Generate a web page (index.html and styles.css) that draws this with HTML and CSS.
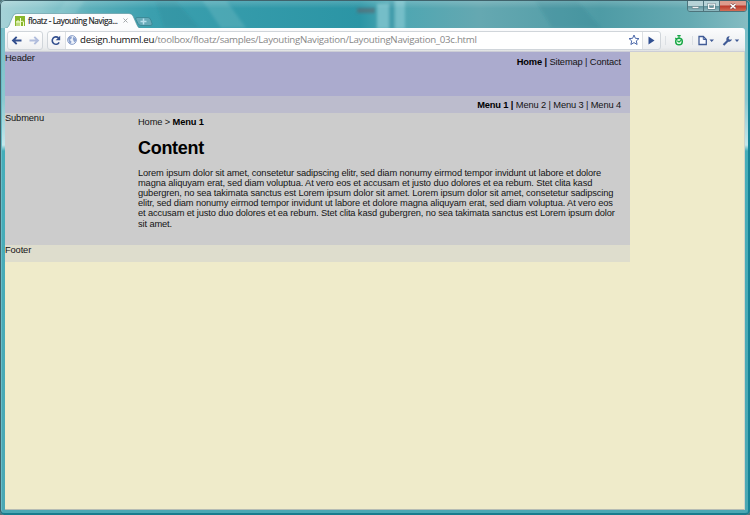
FILE: index.html
```
<!DOCTYPE html>
<html lang="en">
<head>
<meta charset="utf-8">
<title>floatz - Layouting Navigation</title>
<link rel="stylesheet" href="styles.css">
</head>
<body>
<div class="window">
  <header class="titlebar">
    <svg class="glass" viewBox="0 0 750 28" preserveAspectRatio="none" aria-hidden="true">
      <defs>
        <linearGradient id="g" x2="1"><stop offset="0" stop-color="#a6d2d7"/><stop offset=".055" stop-color="#8fc8ce"/><stop offset=".12" stop-color="#5cafba"/><stop offset=".2" stop-color="#3b9fae"/><stop offset=".48" stop-color="#2b95a5"/><stop offset=".52" stop-color="#4ba6b2"/><stop offset=".64" stop-color="#65a8b1"/><stop offset=".8" stop-color="#4e9ba5"/><stop offset=".92" stop-color="#65aab2"/><stop offset="1" stop-color="#86bdc3"/></linearGradient>
        <linearGradient id="v" x2="0" y2="1"><stop stop-color="#fff" stop-opacity=".2"/><stop offset=".3" stop-color="#fff" stop-opacity="0"/></linearGradient>
        <filter id="b"><feGaussianBlur stdDeviation="1.5"/></filter>
      </defs>
      <path fill="url(#g)" d="M0 0h750v28H0z"/>
      <g filter="url(#b)">
        <path fill="#277e8c" opacity=".2" d="M155 0h20l25 28h-36zM535 0h42l24 28h-49z"/>
        <path fill="#bfe6e9" opacity=".16" d="M66 0h19l-20 28H48zM202 0h24l20 28h-25z"/>
        <path fill="#75bec8" d="M377 4h12v25h-12zM395 0h10v29h-10z"/>
        <path fill="#3f9cab" d="M389 0h5v29h-5z"/>
        <path fill="#655e67" opacity=".55" d="M357 8h18v5h-18z"/>
      </g>
      <path fill="url(#v)" d="M0 0h750v28H0z"/>
    </svg>
    <svg class="tabshape" viewBox="0 0 154 16" aria-hidden="true">
      <path d="M0 16C3 15 4 13 5 10L8 3Q9 .5 12 .5H124Q127 .5 128 3L132 12Q133 15.5 137 15.5H154V16Z" fill="#fbfcfd"/>
      <path d="M0 15.5C3 15 4 13 5 10L8 3Q9 .5 12 .5H124Q127 .5 128 3L132 12Q133 15.5 137 15.5" fill="none" stroke="#54919b" stroke-width=".6"/>
      <path d="M132 4.500h11q2 0 3 3l1 3q1 2-2 2h-9q-2 0-3-2l-2-4q-1-2 1-2z" fill="#66aab8" stroke="#337f8c" stroke-width=".7"/>
      <path d="M138.500 5.500v6M135.500 8.500h6" stroke="#b9e0ed" stroke-width="1.500"/>
    </svg>
    <div class="tab">
      <svg class="favicon" viewBox="0 0 10 10"><path fill="#89b62c" d="M0 0h10v10H0z"/><path d="M2 10V5h2v5M1 6h4M5.500 2v8M5.500 6q3-2 3 1v3" fill="none" stroke="#f3ffd5" stroke-width="1"/></svg>
      <span class="tabtitle">floatz - Layouting Naviga...</span>
      <svg class="tabclose" viewBox="0 0 5 5"><path d="M.5.5l4 4M4.500.5l-4 4" stroke="#9a9fa2" stroke-width=".9"/></svg>
    </div>
    <div class="controls">
      <span class="control"><svg viewBox="0 0 16 10"><path d="M4.500 5.500h7v2h-7z" fill="#fff" stroke="#566f76" stroke-width=".6"/></svg></span>
      <span class="control"><svg viewBox="0 0 16 10"><path d="M5 3h6v4.500H5z" fill="none" stroke="#536f77" stroke-width="2.300"/><path d="M5 3h6v4.500H5z" fill="none" stroke="#fff" stroke-width="1.300"/></svg></span>
      <span class="control close"><svg viewBox="0 0 26 10"><path d="M10.500 3l5 4.500M15.500 3l-5 4.500" stroke="#7c4846" stroke-width="2.700"/><path d="M10.500 3l5 4.500M15.500 3l-5 4.500" stroke="#fff" stroke-width="1.600"/></svg></span>
    </div>
  </header>
  <div class="toolbar">
    <div class="group nav">
      <svg viewBox="0 0 34 17"><path d="M13.500 8.500H5.500M8.700 4.800L5 8.500l3.700 3.700" fill="none" stroke="#34508f" stroke-width="1.900"/><path d="M21.500 8.500h8M26.300 4.800L30 8.500l-3.700 3.700" fill="none" stroke="#b1bddd" stroke-width="1.900"/></svg>
    </div>
    <div class="group address">
      <svg class="reload" viewBox="0 0 18 17"><path d="M11.800 10.500A3.900 3.900 0 1 1 11.100 5.800" fill="none" stroke="#34508f" stroke-width="1.700"/><path d="M12.900 3.500v4.800H8.100z" fill="#34508f"/></svg>
      <div class="url">
        <svg class="globe" viewBox="0 0 10 10"><circle cx="5" cy="5" r="4.400" fill="#eef3fb" stroke="#8197c5" stroke-width=".9"/><path d="M1 3l2-1.800 2 .6-.5 1.700L2.700 5l1.700 1.300L4 9 2 7.500zM6.200 2l2.500 1 .5 2.500-1.500 2-1-1.200L5.800 4z" fill="#8da2ce"/></svg>
        <span class="urltext"><b>design.humml.eu</b>/toolbox/floatz/samples/LayoutingNavigation/LayoutingNavigation_03c.html</span>
        <svg class="star" viewBox="0 0 12 12"><path d="M6 1l1.400 3.300 3.600.3-2.700 2.300.8 3.600L6 8.600l-3.100 1.900.8-3.600L1 4.600l3.600-.3z" fill="#fff" stroke="#4b68a9"/></svg>
      </div>
      <svg class="go" viewBox="0 0 17 17"><path d="M5.500 4.500v8l6-4z" fill="#304f91"/></svg>
    </div>
    <svg class="tools" viewBox="0 0 82 17">
      <path d="M4.500 4v9M31.500 4v9" stroke="#dce0e4"/>
      <circle cx="18" cy="9.500" r="3.300" fill="#dfffe4" stroke="#18a646" stroke-width="1.500"/><path d="M18 6V3.500M16.300 3.700h3.400M14.200 6l1.500 1M16.200 8.700L18 10l2.200-1.700" fill="none" stroke="#18a646" stroke-width="1.200"/>
      <path d="M38 4.500h4.300l3 3v5H38z" fill="#f8faff" stroke="#405b96" stroke-width="1.300"/><path d="M42.300 4.500v3h3" fill="none" stroke="#405b96"/>
      <path d="M48.500 7.500H53L50.700 10zM73.700 7.500h4.500L76 10z" fill="#405b96"/>
      <path d="M62.500 13l4.500-4.500" stroke="#405b96" stroke-width="2.200"/><path d="M71 7.300a3 3 0 0 1-5.400 1.200 3 3 0 0 1 3.100-4.300l-1.200 2.300 1.300 1.300z" fill="#405b96"/>
    </svg>
  </div>
  <main class="viewport">
    <div class="page">
      <div class="head"><span>Header</span><nav class="meta"><b>Home |</b> Sitemap | Contact</nav></div>
      <nav class="menu"><b>Menu 1 |</b> Menu 2 | Menu 3 | Menu 4</nav>
      <div class="columns">
        <aside class="submenu">Submenu</aside>
        <article class="content">
          <div class="crumb">Home &gt; <b>Menu 1</b></div>
          <h1>Content</h1>
          <p>Lorem ipsum dolor sit amet, consetetur sadipscing elitr, sed diam nonumy eirmod tempor invidunt ut labore et dolore<br>magna aliquyam erat, sed diam voluptua. At vero eos et accusam et justo duo dolores et ea rebum. Stet clita kasd<br>gubergren, no sea takimata sanctus est Lorem ipsum dolor sit amet. Lorem ipsum dolor sit amet, consetetur sadipscing<br>elitr, sed diam nonumy eirmod tempor invidunt ut labore et dolore magna aliquyam erat, sed diam voluptua. At vero eos<br>et accusam et justo duo dolores et ea rebum. Stet clita kasd gubergren, no sea takimata sanctus est Lorem ipsum dolor<br>sit amet.</p>
        </article>
      </div>
      <footer class="foot">Footer</footer>
    </div>
  </main>
</div>
</body>
</html>
```
FILE: styles.css
```
* { box-sizing: border-box; }
body { margin: 0; background: #55777d; overflow: hidden; }
svg { display: block; flex: none; }
.window {
  position: relative;
  width: 750px;
  height: 515px;
  padding: 0 5px 5px;
  border-radius: 5px;
  overflow: hidden;
  background: linear-gradient(#72bac4 0, #8bc9d0 100px, #c4e7eb 145px, #45adb9 151px, #4ba8b4 100%);
  box-shadow: inset 0 0 0 1px #35636d, inset 0 0 0 2px #69bdc8;
}
.window::after {
  content: "";
  position: absolute;
  inset: 0;
  border: 1px solid #40636c;
  border-right: 2px solid #168396;
  border-bottom: 2px solid #197c8d;
  border-radius: 5px;
}
.titlebar { height: 28px; display: flex; align-items: flex-end; justify-content: space-between; }
.glass { position: absolute; left: 0; top: 0; width: 750px; height: 28px; }
.tabshape { position: absolute; left: 5px; top: 13px; width: 154px; height: 16px; }
.tab { position: relative; display: flex; align-items: center; height: 15px; width: 128px; padding-left: 10px; }
.favicon { width: 10px; height: 10px; }
.tabtitle { flex: 1; margin-left: 3px; white-space: nowrap; font: 8.2px "Open Sans", sans-serif; letter-spacing: -.36px; color: #16191b; -webkit-text-stroke: .15px #16191b; }
.tabclose { width: 5px; height: 5px; margin-right: 5px; }
.controls {
  position: relative;
  align-self: flex-start;
  display: flex;
  height: 12px;
  margin-right: -2px;
  border: 1px solid #4d747c;
  border-radius: 0 0 3px 3px;
  overflow: hidden;
}
.control { width: 16px; background: linear-gradient(#b6d3d7 0 45%, #5e929b 50%, #8fbac1); border-right: 1px solid #4d747c; }
.control svg { width: 100%; height: 10px; }
.close { width: 26px; border: 0; background: linear-gradient(#dd9b8d 0 40%, #bd392b 50%, #d26e56); }
.toolbar {
  position: relative;
  height: 24px;
  display: flex;
  align-items: center;
  padding: 1px 0 0 2px;
  background: linear-gradient(#fbfcfd, #ebedef 85%, #e0e2e3);
  border-bottom: 1px solid #cccdd6;
  border-radius: 0 3px 0 0;
}
.group { height: 19px; border: 1px solid #d0d5da; border-radius: 3px; background: linear-gradient(#fff, #eff0f2); display: flex; align-items: center; overflow: hidden; }
.nav { width: 36px; margin-right: 4px; }
.nav svg { width: 34px; height: 17px; }
.address { width: 614px; }
.reload { width: 17px; height: 17px; }
.url { flex: 1; display: flex; align-items: center; height: 100%; background: #fff; border: solid #dde0e3; border-width: 0 1px; }
.globe { width: 10px; height: 10px; margin-left: 1px; }
.urltext { flex: 1; margin-left: 3px; white-space: nowrap; font: 9.7px/14px "Open Sans", sans-serif; letter-spacing: -.28px; color: #888; }
.urltext b { font-weight: 400; color: #111; }
.star { width: 12px; height: 12px; margin-right: 2px; }
.go { width: 17px; height: 17px; }
.tools { width: 82px; height: 17px; }
.viewport { height: 458px; background: #efebca; font: 9.3px/10.1px "Liberation Sans", sans-serif; letter-spacing: -.125px; color: #141414; border-right: 1px solid #d0d4ca; border-bottom: 1px solid #b5bcb4; }
.page { width: 625px; }
.page b { color: #000; }
.head { height: 44px; padding: 1px 9px 0 0; background: #ababce; display: flex; justify-content: space-between; }
.meta { padding-top: 4px; }
.menu { height: 17px; padding: 4px 9px 0 0; text-align: right; background: #bcbccd; }
.columns { height: 132px; display: flex; background: #ccc; }
.submenu { width: 133px; }
.content { flex: 1; padding-top: 4px; }
h1 { margin: 11px 0 10px; font-size: 18px; line-height: 20px; letter-spacing: -.3px; color: #000; }
p { margin: 0; white-space: nowrap; }
.foot { height: 17px; background: #deddcd; }
```
